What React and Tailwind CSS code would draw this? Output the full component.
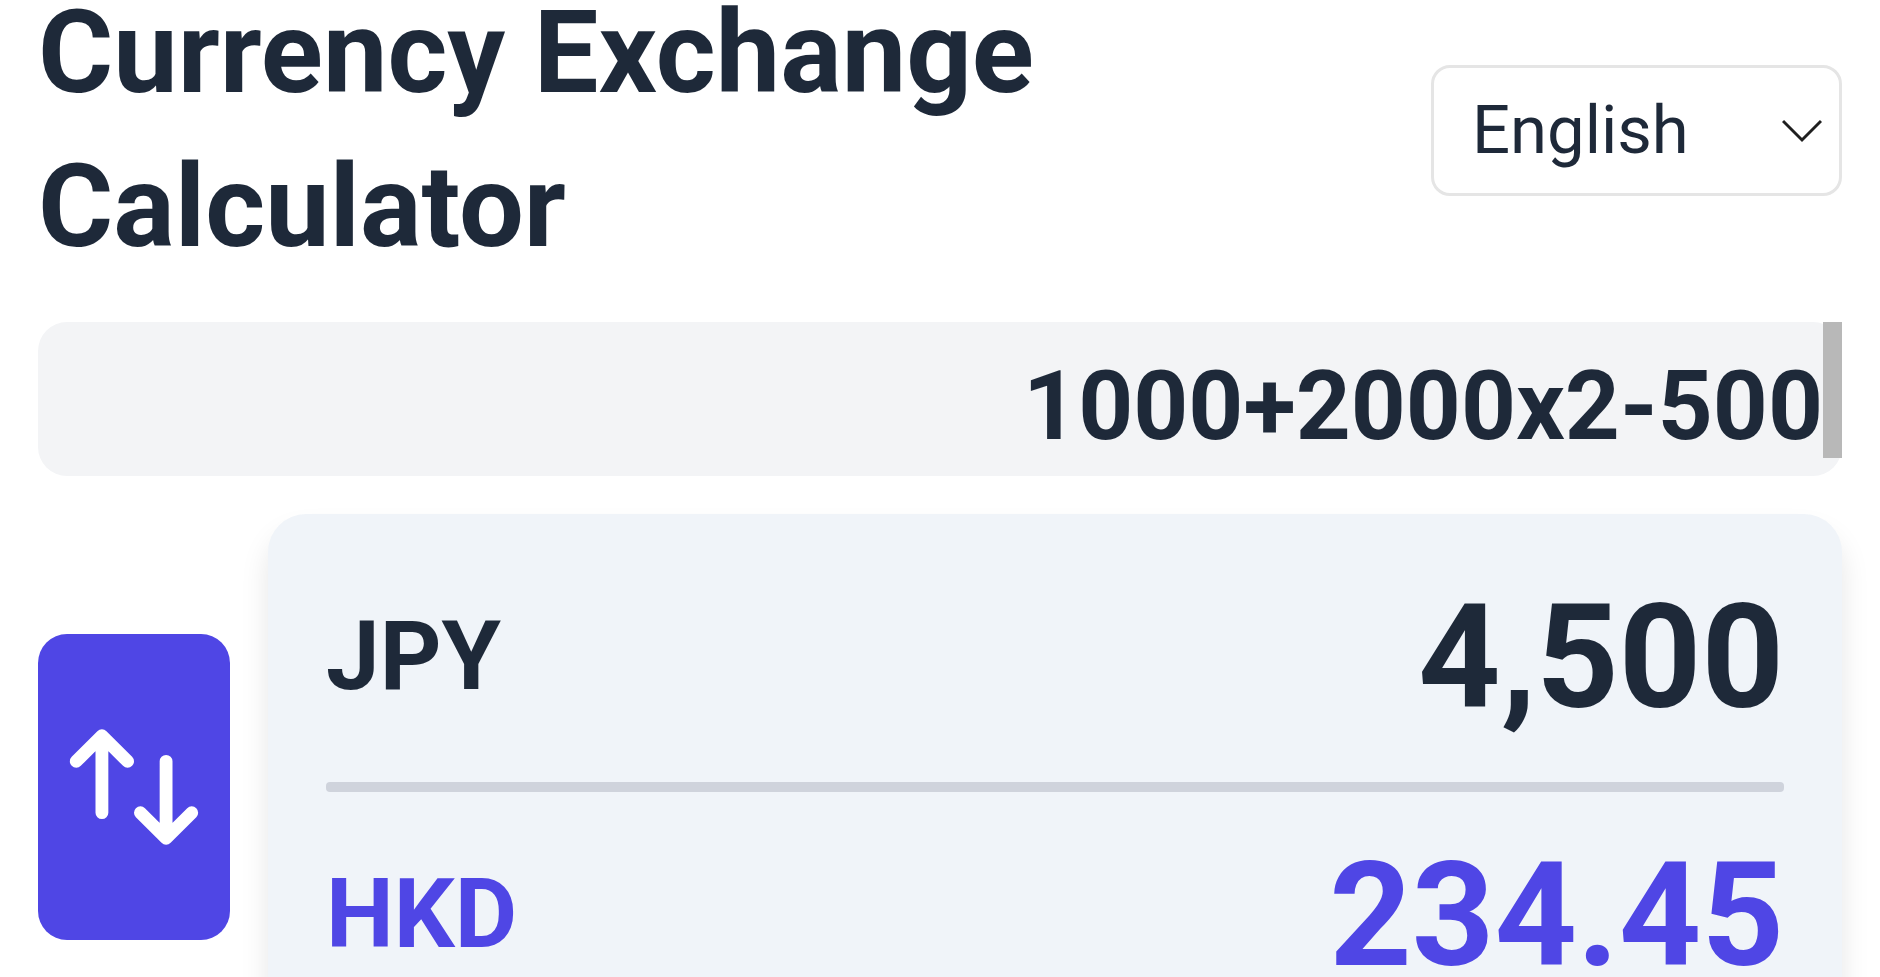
import { useState } from "react";

const LANGUAGES = ["English", "日本語", "繁體中文"];

function LanguageSelect({ value, onChange }) {
  return (
    <div className="relative shrink-0">
      <select
        aria-label="Language"
        value={value}
        onChange={(e) => onChange(e.target.value)}
        className="block h-[131px] w-[411px] appearance-none rounded-[19px] border-3 border-[#e5e5e5] bg-white pl-[38px] pr-24 text-[67px] leading-[96px] text-gray-800"
      >
        {LANGUAGES.map((l) => (
          <option key={l}>{l}</option>
        ))}
      </select>
      <svg
        viewBox="0 0 40 24"
        className="pointer-events-none absolute right-5 top-[54px] h-6 w-10"
        fill="none"
        stroke="#1f1f1f"
        strokeWidth="3"
      >
        <path d="M1 2 L20 21 L39 2" />
      </svg>
    </div>
  );
}

function CurrencyRow({ code, amount, className = "" }) {
  return (
    <div className={`flex items-center justify-between ${className}`}>
      <span className="pb-1 text-[96px] leading-[134px] font-bold">{code}</span>
      <span className="text-[144px] leading-[172px] font-bold">{amount}</span>
    </div>
  );
}

function App() {
  const [language, setLanguage] = useState("English");
  const [swapped, setSwapped] = useState(false);
  const from = { code: "JPY", amount: "4,500" };
  const to = { code: "HKD", amount: "234.45" };
  const [top, bottom] = swapped ? [to, from] : [from, to];

  return (
    <div className="h-screen overflow-hidden bg-white font-['Roboto',sans-serif] text-gray-800">
      <div className="-mt-6 flex flex-col gap-[38px] px-[38px]">
        <header className="flex items-center justify-between">
          <h1 className="text-[115px] leading-[154px] font-bold">
            Currency Exchange Calculator
          </h1>
          <LanguageSelect value={language} onChange={setLanguage} />
        </header>

        <div className="flex h-[154px] items-start rounded-[29px] bg-gray-100">
          <div className="flex-1 pt-[17px] text-right text-[96px] leading-[134px] font-bold">
            1000+2000x2-500
          </div>
          {/* scroll thumb */}
          <div className="h-[136px] w-[19px] bg-[#b8b8b8]" />
        </div>

        <div className="flex items-center gap-[38px]">
          <button
            type="button"
            aria-label="Swap currencies"
            onClick={() => setSwapped(!swapped)}
            className="shrink-0 rounded-[29px] bg-[#4f46e5] px-[19px] py-[76px] text-white"
          >
            <svg
              viewBox="0 0 24 24"
              className="size-[154px]"
              fill="none"
              stroke="currentColor"
              strokeWidth="2"
              strokeLinecap="round"
              strokeLinejoin="round"
            >
              <path d="M7 16V4m0 0L3 8m4-4l4 4m6 0v12m0 0l4-4m-4 4l-4-4" />
            </svg>
          </button>

          <div className="flex-1 rounded-[38px] bg-[#f0f4f9] p-[58px] shadow-[0_19px_29px_rgba(0,0,0,0.1)]">
            <CurrencyRow code={top.code} amount={top.amount} />
            <div className="my-[38px] h-[10px] rounded-sm bg-[#cfd3dc]" />
            <CurrencyRow
              code={bottom.code}
              amount={bottom.amount}
              className="text-[#4f46e5]"
            />
          </div>
        </div>
      </div>
    </div>
  );
}

export default App;
